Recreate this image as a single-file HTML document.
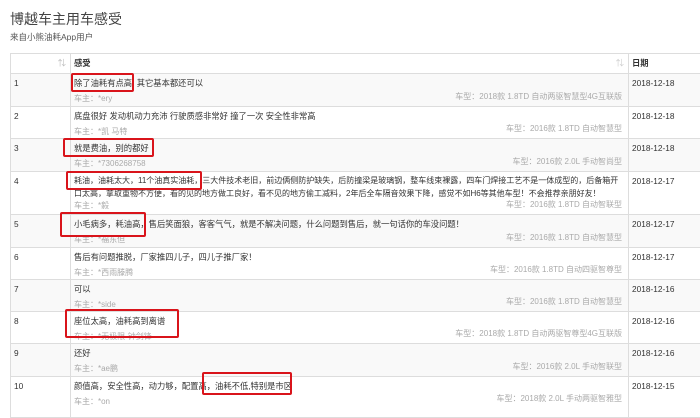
<!DOCTYPE html>
<html><head><meta charset="utf-8"><style>
body{margin:0;width:700px;height:405px;overflow:hidden;background:#fff;font-family:"Liberation Sans","Noto Sans CJK SC",sans-serif;color:#333;position:relative}
.t{position:absolute;left:10px;top:9px;font-size:14px;color:#444}
.s{position:absolute;left:10px;top:31px;font-size:8.5px;color:#555}
.tb{position:absolute;left:10px;top:53px;width:700px;border-top:1px solid #ddd}
.r{position:absolute;left:0;width:700px;border-bottom:1px solid #ddd;font-size:8.3px}
.r.g{background:#f9f9f9}
.c1{position:absolute;left:0;top:0;bottom:0;width:61px;border-left:1px solid #ddd;border-right:1px solid #ddd;box-sizing:border-box;padding:2px 0 0 3px;line-height:15px}
.c2{position:absolute;left:61px;top:0;bottom:0;width:557px;padding:2px 2px 0 3px;box-sizing:border-box;line-height:15px}
.c4 .c2{line-height:12.5px}
.c3{position:absolute;left:618px;top:0;bottom:0;border-left:1px solid #ddd;padding:2px 0 0 3px;width:90px;line-height:15px}
.o{color:#aaa;font-size:8px}
.m{position:absolute;right:6px;bottom:3px;color:#aaa;font-size:8px;line-height:12px}
.b{position:absolute;border:2px solid #d9141b;border-radius:2px}
.h{font-weight:bold;color:#333}
</style></head><body>
<div class="t">博越车主用车感受</div>
<div class="s">来自小熊油耗App用户</div>
<div class="tb">
<div class="r" style="top:0;height:19px;border-bottom:2px solid #ddd"><div class="c1" style="text-align:right;padding-right:4px;color:#bbb">⇅</div><div class="c2 h">感受<span style="position:absolute;right:4px;color:#ccc;font-weight:normal">⇅</span></div><div class="c3 h">日期</div></div>
<div class="r g" style="top:20px;height:32px"><div class="c1">1</div><div class="c2">除了油耗有点高 &nbsp;其它基本都还可以<br><span class="o">车主：*ery</span><span class="m">车型：2018款 1.8TD 自动两驱智慧型4G互联版</span></div><div class="c3">2018-12-18</div></div>
<div class="r" style="top:53px;height:31px"><div class="c1">2</div><div class="c2">底盘很好 发动机动力充沛 行驶质感非常好 撞了一次 安全性非常高<br><span class="o">车主：*凯 马特</span><span class="m">车型：2016款 1.8TD 自动智慧型</span></div><div class="c3">2018-12-18</div></div>
<div class="r g" style="top:85px;height:32px"><div class="c1">3</div><div class="c2">就是费油，别的都好<br><span class="o">车主：*7306268758</span><span class="m">车型：2016款 2.0L 手动智尚型</span></div><div class="c3">2018-12-18</div></div>
<div class="r c4" style="top:118px;height:42px"><div class="c1">4</div><div class="c2" style="padding-top:3px;font-size:8px">耗油，油耗太大，11个油真实油耗，三大件技术老旧，前边俩侧防护缺失，后防撞梁是玻璃钢，整车线束裸露，四车门焊接工艺不是一体成型的，后备箱开口太高，拿取重物不方便，看的见的地方做工良好，看不见的地方偷工减料，2年后全车隔音效果下降，感觉不如H6等其他车型！不会推荐亲朋好友！<br><span class="o">车主：*毅</span><span class="m">车型：2016款 1.8TD 自动智联型</span></div><div class="c3">2018-12-17</div></div>
<div class="r g" style="top:161px;height:32px"><div class="c1">5</div><div class="c2">小毛病多，耗油高，售后笑面狼，客客气气，就是不解决问题，什么问题到售后，就一句话你的车没问题！<br><span class="o">车主：*福东但</span><span class="m">车型：2016款 1.8TD 自动智慧型</span></div><div class="c3">2018-12-17</div></div>
<div class="r" style="top:194px;height:31px"><div class="c1">6</div><div class="c2">售后有问题推脱，厂家推四儿子，四儿子推厂家！<br><span class="o">车主：*西雨滕腾</span><span class="m">车型：2016款 1.8TD 自动四驱智尊型</span></div><div class="c3">2018-12-17</div></div>
<div class="r g" style="top:226px;height:31px"><div class="c1">7</div><div class="c2">可以<br><span class="o">车主：*side</span><span class="m">车型：2016款 1.8TD 自动智慧型</span></div><div class="c3">2018-12-16</div></div>
<div class="r" style="top:258px;height:31px"><div class="c1">8</div><div class="c2">座位太高，油耗高到离谱<br><span class="o">车主：*无极限·钟剑锋</span><span class="m">车型：2018款 1.8TD 自动两驱智尊型4G互联版</span></div><div class="c3">2018-12-16</div></div>
<div class="r g" style="top:290px;height:32px"><div class="c1">9</div><div class="c2">还好<br><span class="o">车主：*ae鹏</span><span class="m">车型：2016款 2.0L 手动智联型</span></div><div class="c3">2018-12-16</div></div>
<div class="r" style="top:323px;height:40px"><div class="c1">10</div><div class="c2">颜值高，安全性高，动力够，配置高，油耗不低,特别是市区<br><span class="o">车主：*on</span><span class="m" style="bottom:12px">车型：2018款 2.0L 手动两驱智雅型</span></div><div class="c3">2018-12-15</div></div>
</div>
<div class="b" style="left:71px;top:73px;width:59px;height:15px"></div>
<div class="b" style="left:63px;top:138px;width:87px;height:15px"></div>
<div class="b" style="left:66px;top:171px;width:132px;height:15px"></div>
<div class="b" style="left:60px;top:212px;width:82px;height:21px"></div>
<div class="b" style="left:65px;top:309px;width:110px;height:25px"></div>
<div class="b" style="left:202px;top:372px;width:86px;height:19px"></div>
</body></html>
